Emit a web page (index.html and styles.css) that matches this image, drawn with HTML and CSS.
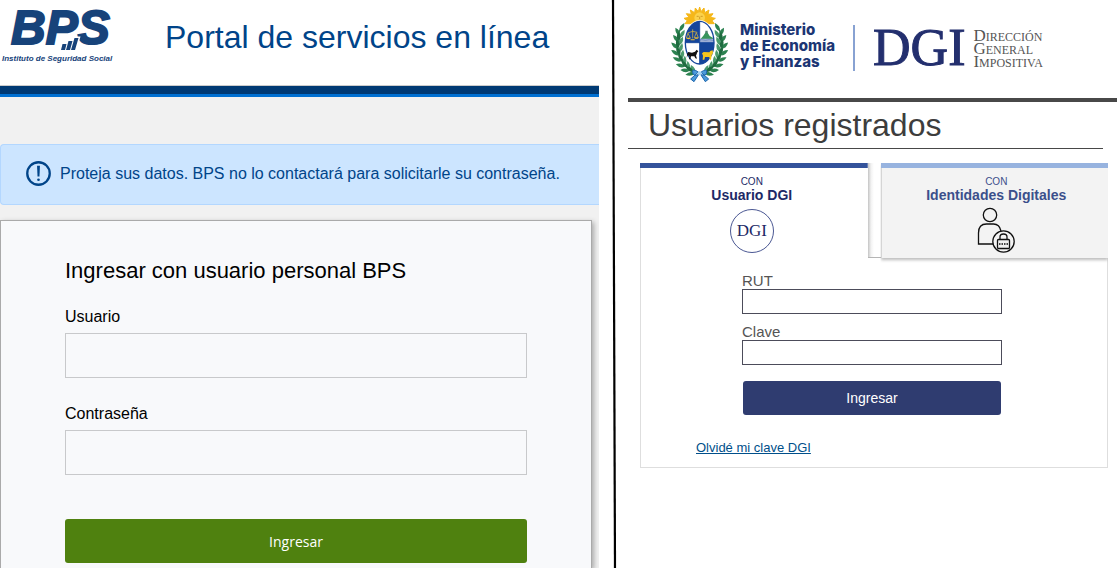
FILE: index.html
```html
<!DOCTYPE html>
<html lang="es">
<head>
<meta charset="utf-8">
<meta name="viewport" content="width=device-width, initial-scale=1">
<title>Portal de servicios en línea</title>
<link rel="stylesheet" href="styles.css">
</head>
<body>
<div class="layout">
  <section class="bps">
    <header class="bps-header">
      <svg class="bps-logo" viewBox="0 0 120 65" role="img" aria-label="BPS">
        <text class="bps-name" x="11" y="40">BPS</text>
        <path d="M62.500 40h4l-1.500 6h-4zM68.500 37h4l-2.500 9h-4zM74.500 34h4l-3.500 12h-4z" fill="#17437a" stroke="#fff" stroke-width="3" paint-order="stroke"/>
        <text class="bps-tagline" x="2" y="57">Instituto de Seguridad Social</text>
      </svg>
      <h1 class="bps-title">Portal de servicios en línea</h1>
    </header>
    <div class="bps-bar"></div>
    <div class="alert">
      <svg class="alert-icon" viewBox="0 0 26 26" aria-hidden="true">
        <circle cx="13" cy="13" r="11.700" fill="none" stroke="#004489" stroke-width="2.400"/>
        <path d="M11.500 5h3l-.5 11h-2z" fill="#004489"/>
        <circle cx="13" cy="19.500" r="1.400" fill="#004489"/>
      </svg>
      <p class="alert-text">Proteja sus datos. BPS no lo contactará para solicitarle su contraseña.</p>
    </div>
    <form class="bps-card">
      <h2 class="bps-card-title">Ingresar con usuario personal BPS</h2>
      <label class="bps-label" for="usuario">Usuario</label>
      <input class="bps-input" id="usuario" type="text">
      <label class="bps-label" for="contrasena">Contraseña</label>
      <input class="bps-input" id="contrasena" type="password">
      <button class="bps-submit" type="button">Ingresar</button>
    </form>
  </section>

  <svg class="divider" viewBox="0 0 29 568" preserveAspectRatio="none" aria-hidden="true">
    <path d="M14 0 16 568" stroke="#000" stroke-width="2.200"/>
  </svg>

  <section class="dgi">
    <header class="dgi-header">
      <svg class="arms" viewBox="0 0 192 246" role="img" aria-label="Escudo del Uruguay">
        <defs>
          <clipPath id="oval"><ellipse cx="95" cy="113" rx="43" ry="64"/></clipPath>
          <path id="leaf" d="M-14 0Q-3-11 14 0Q-2 11-14 0Z"/>
          <g id="branch">
            <path d="M36 74Q2 150 84 208" fill="none" stroke="#2f7a4c" stroke-width="4"/>
            <g fill="#2c8250">
              <use href="#leaf" transform="translate(42 66) rotate(-60)"/>
              <use href="#leaf" transform="translate(29 80) rotate(-120)"/>
              <use href="#leaf" transform="translate(24 101) rotate(-130)"/>
              <use href="#leaf" transform="translate(20 122) rotate(-138)"/>
              <use href="#leaf" transform="translate(21 143) rotate(-145)"/>
              <use href="#leaf" transform="translate(27 163) rotate(-155)"/>
              <use href="#leaf" transform="translate(37 181) rotate(-165)"/>
              <use href="#leaf" transform="translate(51 196) rotate(-175)"/>
              <use href="#leaf" transform="translate(66 207) rotate(170)"/>
            </g>
            <g fill="#4b9b6c">
              <use href="#leaf" transform="translate(43 86) rotate(-60)"/>
              <use href="#leaf" transform="translate(39 108) rotate(-65)"/>
              <use href="#leaf" transform="translate(39 128) rotate(-72)"/>
              <use href="#leaf" transform="translate(43 148) rotate(-80)"/>
              <use href="#leaf" transform="translate(50 166) rotate(-88)"/>
              <use href="#leaf" transform="translate(61 182) rotate(-100)"/>
              <use href="#leaf" transform="translate(75 193) rotate(-115)"/>
            </g>
            <g fill="#1f6b40">
              <use href="#leaf" transform="translate(32 94) rotate(-95)"/>
              <use href="#leaf" transform="translate(29 116) rotate(-100)"/>
              <use href="#leaf" transform="translate(31 138) rotate(-110)"/>
              <use href="#leaf" transform="translate(38 159) rotate(-120)"/>
              <use href="#leaf" transform="translate(49 177) rotate(-130)"/>
              <use href="#leaf" transform="translate(64 192) rotate(-145)"/>
            </g>
          </g>
        </defs>
        <path d="M95 6 99 20 108 9 110 23 123 15 120 28 135 26 127 37 142 40 132 47 139 56 51 56 58 47 48 40 63 37 55 26 70 28 67 15 80 23 82 9 91 20Z" fill="#f5b719" stroke="#f5b719" stroke-width="3"/>
        <circle cx="95" cy="38" r="16" fill="#fbd24b"/>
        <path d="M86 34h6M98 34h6M95 35v7M89 46h12" stroke="#b97b10" stroke-width="2"/>
        <use href="#branch"/>
        <use href="#branch" transform="translate(190 0) scale(-1 1)"/>
        <ellipse cx="95" cy="113" rx="47" ry="68" fill="#fff"/>
        <g clip-path="url(#oval)">
          <path d="M50 46H95V113H50ZM95 113H140V180H95Z" fill="#15459b"/>
          <path d="M95 46H140V113H95ZM50 113H95V180H50Z" fill="#fff"/>
          <path d="M97 103 106 92 113 82 118 82 125 93 140 102V108H97Z" fill="#37945b"/>
          <path d="M112 77h7v7h-7z" fill="#4e806c"/>
          <path d="M96 101H140V113H96Z" fill="#9dafd5"/>
          <path d="M96 105q6-3 11 0t11 0 11 0 11 0" fill="none" stroke="#6683bb" stroke-width="2"/>
        </g>
        <ellipse cx="95" cy="113" rx="43" ry="64" fill="none" stroke="#15459b" stroke-width="4"/>
        <path d="M95 49V177M52 113H138" stroke="#15459b" stroke-width="3"/>
        <path d="M74 73V100M59 84 74 79 88 82M60 85 55 99H67ZM85 83 79 98H91Z" fill="none" stroke="#f2c230" stroke-width="2"/>
        <path d="M54 99h15q-7 7-15 0zM78 98h14q-7 7-14 0zM68 103h12v3h-12z" fill="#f2c230"/>
        <path d="M58 145 61 141 72 143 81 140 86 134 91 139 88 142 84 152 87 161 82 160 79 154 69 154 67 163 63 163 64 154 60 150 56 158Z" fill="#111"/>
        <path d="M102 145 107 141 124 142 127 138 134 136 135 144 131 150 129 164 125 164 124 156 111 156 109 164 104 164 105 152Z" fill="#f7c51e"/>
        <path d="M95 204Q68 184 75 207Q84 216 95 204Q122 184 115 207Q106 216 95 204L78 230 68 222 90 202M95 204 112 230 122 222 99 202" fill="#4c9ada" stroke="#1e67ad" stroke-width="3"/>
        <circle cx="95" cy="205" r="6" fill="#a7d5f4"/>
      </svg>
      <p class="ministry">Ministerio<br>de Economía<br>y Finanzas</p>
      <span class="header-rule"></span>
      <span class="dgi-mark">DGI</span>
      <p class="dgi-name">Dirección<br>General<br>Impositiva</p>
    </header>
    <div class="dgi-bar"></div>
    <h1 class="dgi-title">Usuarios registrados</h1>
    <div class="panel">
      <div class="tabs" role="tablist">
        <button class="tab tab-active" type="button" role="tab" aria-selected="true">
          <span class="tab-kicker">CON</span>
          <strong class="tab-name">Usuario DGI</strong>
          <span class="dgi-badge">DGI</span>
        </button>
        <span class="tab-gap"></span>
        <button class="tab tab-idle" type="button" role="tab" aria-selected="false">
          <span class="tab-kicker">CON</span>
          <strong class="tab-name">Identidades Digitales</strong>
          <svg class="tab-icon" viewBox="0 0 38 48" fill="none" stroke="#111" stroke-width="1.300" aria-hidden="true">
            <circle cx="13" cy="8" r="6.700"/>
            <path d="M16 37H1.500V26q0-9 8-9h7q6 0 7.500 7"/>
            <circle cx="26.500" cy="34.500" r="10.700"/>
            <rect x="20.500" y="32.500" width="12" height="9" rx="1"/>
            <path d="M23 32v-2q0-3 3.500-3t3.500 3v2"/>
            <path d="M22 37h9" stroke-dasharray="1.500 1"/>
          </svg>
        </button>
      </div>
      <form class="dgi-form">
        <label class="dgi-label" for="rut">RUT</label>
        <input class="dgi-input" id="rut" type="text">
        <label class="dgi-label" for="clave">Clave</label>
        <input class="dgi-input" id="clave" type="password">
        <button class="dgi-submit" type="button">Ingresar</button>
      </form>
      <a class="forgot" href="#">Olvidé mi clave DGI</a>
    </div>
  </section>
</div>
</body>
</html>
```
FILE: styles.css
```css
* {
  box-sizing: border-box;
}

body {
  margin: 0;
  background: #fff;
  font-family: "Liberation Sans", Arial, sans-serif;
}

h1, h2, p {
  margin: 0;
  font-weight: 400;
}

button, input {
  font: inherit;
}

.layout {
  display: grid;
  grid-template-columns: 599fr 29px 489fr;
  height: 100vh;
  overflow: hidden;
}

.divider {
  width: 100%;
  height: 100%;
}

/* BPS */
.bps {
  display: flex;
  flex-direction: column;
  min-height: 0;
  overflow: hidden;
  background: #f1f1f1;
}

.bps-header {
  display: flex;
  align-items: center;
  gap: 45px;
  padding: 4px 0 16px;
  background: #fff;
}

.bps-logo {
  width: 120px;
  height: 65px;
  flex: none;
}

.bps-name {
  font-size: 48px;
  font-weight: 700;
  font-style: italic;
  fill: #17437a;
  stroke: #17437a;
  stroke-width: 2px;
}

.bps-tagline {
  font-size: 8px;
  font-weight: 700;
  font-style: italic;
  fill: #17437a;
}

.bps-title {
  font-size: 32px;
  line-height: 40px;
  color: #004489;
}

.bps-bar {
  flex: none;
  height: 12px;
  border-top: 1px solid #ccc;
  border-bottom: 3px solid #0070d2;
  background: #003a74;
}

.alert {
  display: flex;
  align-items: center;
  gap: 9px;
  margin-top: 47px;
  padding: 16px 25px 18px;
  border: 1px solid #b3d7ff;
  border-right: 0;
  border-radius: 4px 0 0 4px;
  background: #cce5ff;
}

.alert-icon {
  width: 25px;
  height: 25px;
  flex: none;
}

.alert-text {
  font-size: 16px;
  line-height: 24px;
  color: #004489;
}

.bps-card {
  display: flex;
  flex: 1 0 auto;
  flex-direction: column;
  margin: 15px 7px 0 0;
  padding: 34px 64px 5px;
  border: 1px solid #aaa;
  border-bottom: 0;
  background: #f8f9fb;
  box-shadow: 2px 2px 5px rgba(0, 0, 0, 0.3);
}

.bps-card-title {
  margin-bottom: 18px;
  font-size: 22px;
  line-height: 32px;
}

.bps-label {
  margin-bottom: 5px;
  font-size: 16px;
  line-height: 23px;
}

.bps-input {
  height: 45px;
  margin-bottom: 24px;
  padding: 0 12px;
  border: 1px solid #c8c9cb;
  background: transparent;
}

.bps-submit {
  height: 44px;
  margin-top: 20px;
  border: 0;
  border-radius: 3px;
  background: #4f810f;
  color: #fff;
  font-family: "Open Sans", sans-serif;
  font-size: 14px;
  font-weight: 500;
}

/* DGI */
.dgi-header {
  display: flex;
  align-items: center;
  height: 98px;
  padding: 0 0 6px 40px;
}

.arms {
  width: 64px;
  height: 82px;
  flex: none;
}

.ministry {
  margin-left: 8px;
  color: #1c3674;
  font-family: Inter, sans-serif;
  font-size: 15px;
  font-weight: 800;
  line-height: 16px;
}

.header-rule {
  width: 2px;
  height: 46px;
  margin: 4px 18px 0;
  background: #88a2d2;
}

.dgi-mark {
  margin-top: 4px;
  color: #232f6e;
  font-family: "Liberation Serif", serif;
  font-size: 52px;
  line-height: 52px;
  -webkit-text-stroke: 1px #232f6e;
}

.dgi-name {
  margin: 4px 0 0 8px;
  color: #555;
  font-family: "Liberation Serif", serif;
  font-size: 17px;
  font-variant: small-caps;
  line-height: 13px;
}

.dgi-bar {
  height: 4px;
  background: #484848;
}

.dgi-title {
  margin-right: 14px;
  padding: 3px 20px;
  border-bottom: 1px solid #484848;
  font-size: 32px;
  line-height: 40px;
  color: #3d3d3d;
}

.panel {
  margin: 14px 9px 0 12px;
  padding-bottom: 9px;
  border: 1px solid #dedede;
  border-top: 0;
}

.tabs {
  display: flex;
  margin: 0 -1px;
}

.tab {
  display: flex;
  flex: 1;
  flex-direction: column;
  align-items: center;
  height: 95px;
  padding: 8px 0 0;
  border: 0;
  text-align: center;
}

.tab-active {
  background:
    linear-gradient(#34539b, #34539b) top / 100% 5px no-repeat,
    linear-gradient(#dedede, #dedede) left / 1px 100% no-repeat,
    #fff;
  padding: 13px 4px 0 0;
  color: #1d2966;
}

.tab-gap {
  width: 13px;
  border-bottom: 1px solid #b5b5b5;
  background: linear-gradient(90deg, #c4c4c4, #f2f2f2 3px, #fff 6px);
}

.tab-idle {
  background:
    linear-gradient(#97b3df, #97b3df) top / 100% 5px no-repeat,
    linear-gradient(90deg, #d5d5d5 1px, transparent 1px),
    #f3f3f3;
  padding: 13px 0 0 4px;
  box-shadow: 0 2px 3px #bbb;
  clip-path: inset(0 0 -6px 0);
  color: #3b4f8b;
}

.tab-kicker {
  font-size: 10px;
  line-height: 11px;
}

.tab-name {
  font-size: 14px;
  line-height: 16px;
}

.dgi-badge {
  display: grid;
  place-items: center;
  width: 44px;
  height: 44px;
  margin-top: 6px;
  border: 1px solid #4b5893;
  border-radius: 50%;
  font-family: "Liberation Serif", serif;
  font-size: 17px;
  -webkit-text-stroke: 0;
}

.tab-icon {
  width: 38px;
  height: 48px;
  margin-top: 4px;
}

.dgi-form {
  display: flex;
  flex-direction: column;
  width: 260px;
  max-width: 100%;
  margin: 14px 0 0 101px;
}

.dgi-label {
  font-size: 15px;
  line-height: 17px;
  color: #555;
}

.dgi-input {
  height: 25px;
  margin-bottom: 9px;
  padding: 0 4px;
  border: 1px solid #4c4c5a;
  background: #fff;
}

.dgi-submit {
  height: 34px;
  margin: 7px 1px 0;
  border: 0;
  border-radius: 3px;
  background: #2f3c70;
  color: #fff;
  font-size: 14px;
}

.forgot {
  display: inline-block;
  margin: 23px 0 0 55px;
  color: #004f8a;
  font-size: 13px;
  line-height: 20px;
}
```
